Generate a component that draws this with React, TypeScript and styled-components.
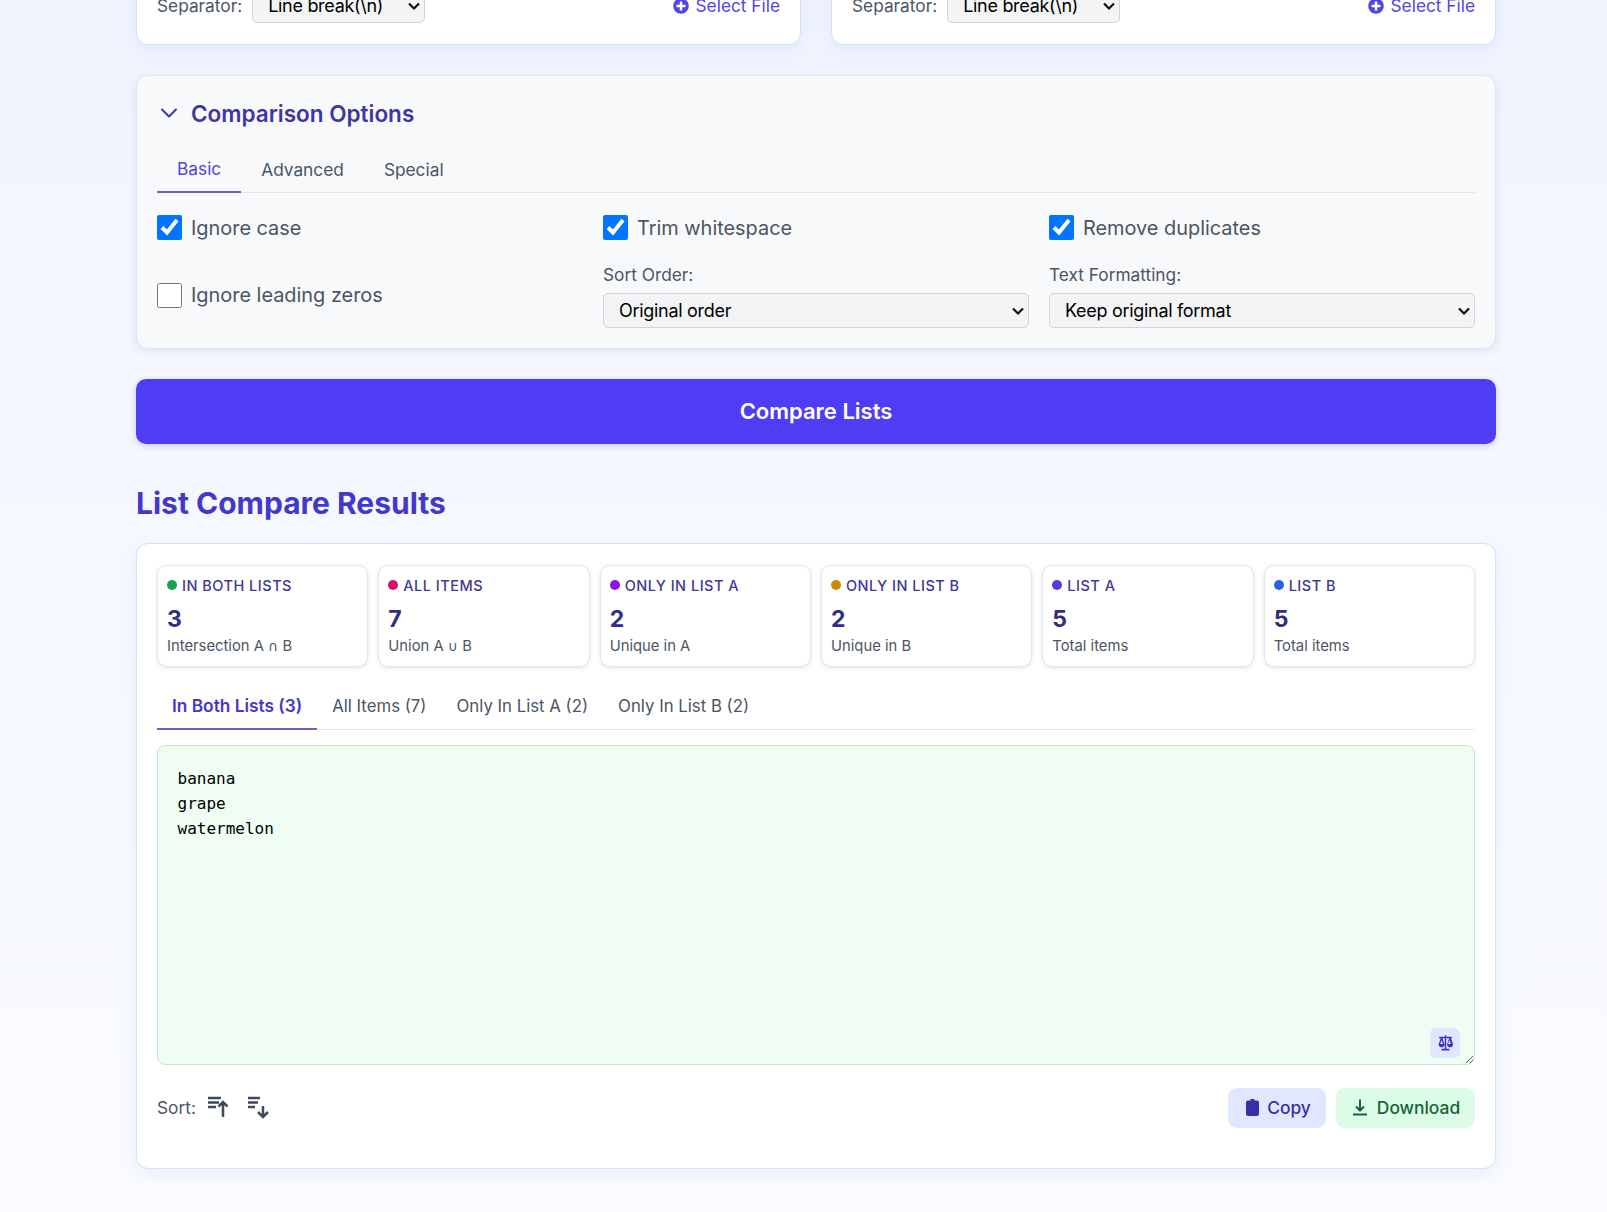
import React from "react";
import styled, { createGlobalStyle } from "styled-components";
import { FaPlusCircle } from "react-icons/fa";

const chevron =
  "url(\"data:image/svg+xml,%3Csvg xmlns='http://www.w3.org/2000/svg' width='14' height='10' viewBox='0 0 14 10'%3E%3Cpath d='M2 2.500l5 5 5-5' fill='none' stroke='%23111' stroke-width='2.200'/%3E%3C/svg%3E\")";

const Global = createGlobalStyle`
  html, body { margin: 0; padding: 0; height: 100%; overflow: hidden; }
  body {
    background: linear-gradient(180deg, #f0f4ff 0%, #f5f8ff 45%, #f9fbff 100%);
    font-family: Inter, "Liberation Sans", sans-serif;
    color: #374151;
  }
  * { box-sizing: border-box; }
`;

const Page = styled.main`
  width: 1360px;
  margin: -33px 0 0 136px;
  display: flex;
  flex-direction: column;
`;

const TopGrid = styled.div`
  display: grid;
  grid-template-columns: 1fr 1fr;
  gap: 30px;
`;

const Card = styled.section`
  background: #fff;
  border: 1px solid #d5e0f5;
  border-radius: 12px;
  box-shadow: 0 6px 18px rgba(67, 97, 238, 0.08);
  padding: 20px;
`;

const ListCardBox = styled(Card)`
  padding-bottom: 21px;
`;

const ListFooter = styled.div`
  display: flex;
  align-items: center;
  justify-content: space-between;
  height: 35px;
`;

const SeparatorGroup = styled.div`
  display: flex;
  align-items: center;
  gap: 10px;
`;

const SeparatorLabel = styled.span`
  font-size: 17.3px;
  color: #4b5563;
`;

const NativeSelect = styled.select<{ $full?: boolean }>`
  appearance: none;
  flex-shrink: 0;
  width: ${(p) => (p.$full ? "100%" : "173px")};
  height: 35px;
  padding: 0 20px 0 15px;
  background: #f3f4f6 ${chevron} no-repeat right 3px center;
  border: 1px solid #d1d5db;
  border-radius: 5px;
  font-family: inherit;
  font-size: 18px;
  letter-spacing: -0.3px;
  color: #000;
`;

const SelectFile = styled.span`
  display: inline-flex;
  align-items: center;
  gap: 7px;
  font-size: 17.3px;
  color: #4f46e5;
`;

const Options = styled(Card)`
  margin-top: 30px;
  height: 274px;
  padding-top: 19px;
  background: #f8f9fb;
  border-color: #e0e5f0;
  box-shadow: 0 2px 8px rgba(30, 50, 120, 0.1);
`;

const OptionsHead = styled.div`
  display: flex;
  align-items: center;
  gap: 10px;
  height: 36px;
  margin-bottom: 16px;
`;

const OptionsTitle = styled.h2`
  margin: 0;
  font-size: 22.5px;
  font-weight: 600;
  color: #3f35a3;
`;

const Tabs = styled.div<{ $gapBottom: number }>`
  display: flex;
  border-bottom: 1px solid #e2e5ea;
  margin-bottom: ${(p) => p.$gapBottom}px;
`;

const Tab = styled.div<{ $active?: boolean; $pad: number; $strong?: boolean; $size: number }>`
  height: 46px;
  margin-bottom: -1px;
  padding: 0 ${(p) => p.$pad}px ${(p) => (p.$active ? 2 : 0)}px;
  display: flex;
  align-items: center;
  font-size: ${(p) => p.$size}px;
  font-weight: ${(p) => (p.$active && p.$strong ? 600 : 400)};
  color: ${(p) => (p.$active ? (p.$strong ? "#4338ca" : "#5046d8") : "#4b5563")};
  border-bottom: 2px solid ${(p) => (p.$active ? "#6a63c4" : "transparent")};
`;

const OptionGrid = styled.div`
  display: grid;
  grid-template-columns: repeat(3, 1fr);
  column-gap: 20px;
  grid-template-rows: 25px 62px;
  row-gap: 24px;
  margin-top: 22px;
`;

const CheckRow = styled.label`
  display: flex;
  align-items: center;
  gap: 9px;
  font-size: 19.9px;
  color: #4b5563;
`;

const Check = styled.input`
  width: 25px;
  height: 25px;
  margin: 0;
`;

const Field = styled.div`
  display: flex;
  flex-direction: column;
  gap: 8px;
  margin-top: 1px;
`;

const FieldLabel = styled.label`
  font-size: 17.3px;
  line-height: 20px;
  color: #4b5563;
`;

const CompareButton = styled.button`
  margin-top: 30px;
  height: 65px;
  padding: 0 0 2px;
  border: 0;
  border-radius: 10px;
  background: #4f3df5;
  color: #fff;
  font-family: inherit;
  font-size: 22px;
  font-weight: 600;
  box-shadow: 0 2px 6px rgba(79, 61, 245, 0.25);
`;

const ResultsTitle = styled.h2`
  margin: 38px 0 19px;
  font-size: 30px;
  line-height: 42px;
  font-weight: 700;
  color: #4338ca;
`;

const Results = styled(Card)`
  height: 626px;
  padding-top: 21px;
`;

const StatGrid = styled.div`
  display: grid;
  grid-template-columns: repeat(6, 1fr);
  gap: 10px;
`;

const Stat = styled.div`
  height: 102px;
  padding: 9px 9px;
  background: #fff;
  border: 1px solid #e5e7eb;
  border-radius: 10px;
  box-shadow: 0 1px 4px rgba(0, 0, 0, 0.12);
`;

const StatLabel = styled.div`
  display: flex;
  align-items: center;
  gap: 5px;
  height: 20px;
  font-size: 14.5px;
  font-weight: 500;
  letter-spacing: 0.5px;
  color: #3f3a96;
  text-transform: uppercase;
`;

const Dot = styled.span<{ $color: string }>`
  width: 10px;
  height: 10px;
  border-radius: 50%;
  background: ${(p) => p.$color};
`;

const StatValue = styled.div`
  margin-top: 10px;
  font-size: 23px;
  line-height: 28px;
  font-weight: 700;
  color: #312e81;
`;

const StatSub = styled.div`
  margin-top: 3px;
  font-size: 14.8px;
  line-height: 20px;
  color: #4b5563;
`;

const SetOperator = styled.span`
  font-family: "DejaVu Sans", sans-serif;
  font-size: 14px;
`;

const ResultTabs = styled(Tabs)`
  margin-top: 17px;
`;

const OutputWrap = styled.div`
  position: relative;
  height: 320px;
`;

const Output = styled.textarea`
  display: block;
  width: 100%;
  height: 100%;
  padding: 20px 19.5px;
  margin: 0;
  background: #effdf3;
  border: 1px solid #bfe9cc;
  border-radius: 8px;
  font-family: "DejaVu Sans Mono", "Liberation Mono", monospace;
  font-size: 16px;
  line-height: 25px;
  color: #000;
  resize: both;
  outline: none;
`;

const ScaleBadge = styled.div`
  position: absolute;
  right: 15px;
  bottom: 7px;
  width: 30px;
  height: 30px;
  border-radius: 6px;
  background: #e0e7ff;
  color: #3f35c0;
  display: flex;
  align-items: center;
  justify-content: center;
`;

const Actions = styled.div`
  display: flex;
  align-items: center;
  justify-content: space-between;
  margin-top: 23px;
`;

const SortGroup = styled.div`
  display: flex;
  align-items: center;
  padding-bottom: 2px;
  font-size: 17.3px;
  color: #4b5563;
`;

const SortIcon = styled.svg`
  width: 24px;
  height: 24px;
  margin-left: 11px;
  fill: none;
  stroke: #414a5a;
  stroke-width: 2.5;
  &:last-child { margin-left: 16px; }
`;

const ButtonRow = styled.div`
  display: flex;
  gap: 10px;
`;

const ActionButton = styled.button<{ $bg: string; $fg: string; $w: number; $shift: number }>`
  width: ${(p) => p.$w}px;
  height: 40px;
  display: inline-flex;
  align-items: center;
  justify-content: center;
  gap: 8px;
  padding: 0 0 2px ${(p) => p.$shift}px;
  border: 0;
  border-radius: 9px;
  background: ${(p) => p.$bg};
  color: ${(p) => p.$fg};
  font-family: inherit;
  font-size: 17.4px;
  font-weight: 500;
`;

const ListCard = () => (
  <ListCardBox>
    <ListFooter>
      <SeparatorGroup>
        <SeparatorLabel>Separator:</SeparatorLabel>
        <NativeSelect defaultValue="n">
          <option value="n">Line break(\n)</option>
        </NativeSelect>
      </SeparatorGroup>
      <SelectFile>
        <FaPlusCircle size={16} />
        Select File
      </SelectFile>
    </ListFooter>
  </ListCardBox>
);

const stats: [string, string, React.ReactNode, string][] = [
  ["In Both Lists", "3", <>Intersection A <SetOperator>∩</SetOperator> B</>, "#16a34a"],
  ["All Items", "7", <>Union A <SetOperator>∪</SetOperator> B</>, "#db0f6b"],
  ["Only In List A", "2", "Unique in A", "#9013e8"],
  ["Only In List B", "2", "Unique in B", "#ca8a04"],
  ["List A", "5", "Total items", "#4f3de0"],
  ["List B", "5", "Total items", "#2563eb"],
];

export default function App() {
  return (
    <>
      <Global />
      <Page>
        <TopGrid>
          <ListCard />
          <ListCard />
        </TopGrid>

        <Options>
          <OptionsHead>
            <svg width="24" height="24" viewBox="0 0 24 24" fill="none" stroke="#3f35a3" strokeWidth="2" strokeLinecap="round" strokeLinejoin="round">
              <path d="M5 8.5l7 7 7-7" />
            </svg>
            <OptionsTitle>Comparison Options</OptionsTitle>
          </OptionsHead>
          <Tabs $gapBottom={0}>
            <Tab $active $pad={20} $size={17.3}>Basic</Tab>
            <Tab $pad={20} $size={17.3}>Advanced</Tab>
            <Tab $pad={20} $size={17.3}>Special</Tab>
          </Tabs>
          <OptionGrid>
            <CheckRow><Check type="checkbox" defaultChecked />Ignore case</CheckRow>
            <CheckRow><Check type="checkbox" defaultChecked />Trim whitespace</CheckRow>
            <CheckRow><Check type="checkbox" defaultChecked />Remove duplicates</CheckRow>
            <CheckRow><Check type="checkbox" />Ignore leading zeros</CheckRow>
            <Field>
              <FieldLabel>Sort Order:</FieldLabel>
              <NativeSelect $full defaultValue="o"><option value="o">Original order</option></NativeSelect>
            </Field>
            <Field>
              <FieldLabel>Text Formatting:</FieldLabel>
              <NativeSelect $full defaultValue="k"><option value="k">Keep original format</option></NativeSelect>
            </Field>
          </OptionGrid>
        </Options>

        <CompareButton>Compare Lists</CompareButton>

        <ResultsTitle>List Compare Results</ResultsTitle>

        <Results>
          <StatGrid>
            {stats.map(([label, value, sub, color]) => (
              <Stat key={label}>
                <StatLabel><Dot $color={color} />{label}</StatLabel>
                <StatValue>{value}</StatValue>
                <StatSub>{sub}</StatSub>
              </Stat>
            ))}
          </StatGrid>

          <ResultTabs $gapBottom={15}>
            <Tab $active $strong $pad={15} $size={17.3}>In Both Lists (3)</Tab>
            <Tab $pad={15} $size={16.8}>All Items (7)</Tab>
            <Tab $pad={15} $size={16.8}>Only In List A (2)</Tab>
            <Tab $pad={15} $size={16.8}>Only In List B (2)</Tab>
          </ResultTabs>

          <OutputWrap>
            <Output readOnly defaultValue={"banana\ngrape\nwatermelon"} />
            <ScaleBadge>
              <svg width="17" height="18" viewBox="0 0 24 24" fill="currentColor">
                <path d="M11 1h2v2h8v2.4h-1.2l3 8.6c0 2.6-2.2 4-4.3 4s-4.3-1.4-4.3-4l3-8.6H13V20h4.5v2.5h-11V20H11V5.4H7.8l3 8.6c0 2.6-2.2 4-4.3 4s-4.3-1.4-4.3-4l3-8.6H3V3h8V1zM6.5 8l-2 5.5h4L6.5 8zm11 0l-2 5.5h4l-2-5.5z" fillRule="evenodd" />
              </svg>
            </ScaleBadge>
          </OutputWrap>

          <Actions>
            <SortGroup>
              Sort:
              <SortIcon viewBox="0 0 24 24">
                <path d="M1 3h13M1 7.5h11M1 12h8M16 22V7M11.5 11.5l4.500-4.500 4.500 4.500" />
              </SortIcon>
              <SortIcon viewBox="0 0 24 24">
                <path d="M1 3h12M1 7.5h10M1 12h7M16 11v11M11 17l5 5 5-5" />
              </SortIcon>
            </SortGroup>
            <ButtonRow>
              <ActionButton $bg="#e0e7ff" $fg="#3730a3" $w={98} $shift={3}>
                <svg width="13" height="17" viewBox="0 0 13 17" fill="currentColor">
                  <path d="M4.500 0h4v1.500H11A2 2 0 0 1 13 3.500v11.500a2 2 0 0 1-2 2H2a2 2 0 0 1-2-2V3.500a2 2 0 0 1 2-2h2.500V0z" />
                </svg>
                Copy
              </ActionButton>
              <ActionButton $bg="#dcfce7" $fg="#166534" $w={139} $shift={0}>
                <svg width="18" height="18" viewBox="0 0 18 18" fill="none" stroke="#166534" strokeWidth="2">
                  <path d="M9 1.5v10.5M5 8.5l4 4 4-4M2 16.5h14" />
                </svg>
                Download
              </ActionButton>
            </ButtonRow>
          </Actions>
        </Results>
      </Page>
    </>
  );
}
